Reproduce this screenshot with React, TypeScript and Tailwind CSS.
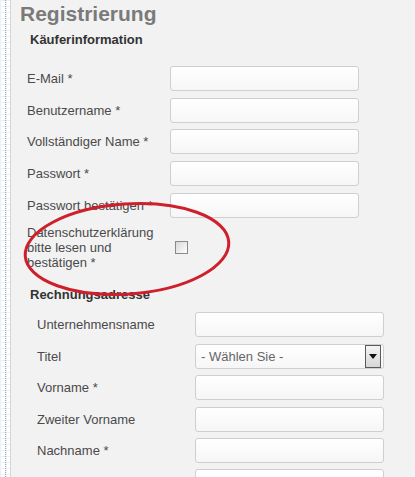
const sans = { fontFamily: '"Liberation Sans", Arial, sans-serif' };

function TextInput() {
  return (
    <div className="h-[25px] w-[189px] rounded-[3px] border border-[#cfcfcf] bg-gradient-to-b from-[#ffffff] to-[#f6f6f6]" />
  );
}

function Row({ label, labelWidth, children }: { label: string; labelWidth: string; children?: React.ReactNode }) {
  return (
    <div className="flex items-center">
      <div className={`${labelWidth} text-[13px] leading-[15px] text-[#4a4a4a]`}>{label}</div>
      {children ?? <TextInput />}
    </div>
  );
}

export default function App() {
  const first = ["E-Mail *", "Benutzername *", "Vollständiger Name *", "Passwort *", "Passwort bestätigen *"];
  const second = ["Unternehmensname", "Titel", "Vorname *", "Zweiter Vorname", "Nachname *", ""];

  return (
    <div className="relative flex h-[477px] w-[415px] overflow-hidden bg-[#f2f2f2]" style={sans}>
      {/* linker Rand mit Raster */}
      <div className="flex w-[10px] shrink-0 justify-center bg-white bg-[linear-gradient(#eef0f4_1px,transparent_1px),linear-gradient(90deg,#eef0f4_1px,transparent_1px)] bg-[size:6px_6px]">
        <div className="h-full border-l border-dotted border-[#8fa3c0]" />
      </div>

      <div className="flex-1 border-l border-[#d6d6d6] pl-[9px]">
        <h1 className="pt-[2px] text-[21px] font-bold leading-[24px] text-[#7a7a7a]">Registrierung</h1>
        <h2 className="mt-[6px] pl-[10px] text-[13px] font-bold leading-[15px] text-[#333]">Käuferinformation</h2>

        <div className="mt-[19px] flex flex-col gap-[6.7px] pl-[7px]">
          {first.map((l) => (
            <Row key={l} label={l} labelWidth="w-[143px]" />
          ))}
          <div className="mt-[1px] flex items-center">
            <div className="w-[143px] text-[13px] leading-[15px] text-[#4a4a4a]">
              Datenschutzerklärung
              <br />
              bitte lesen und
              <br />
              bestätigen *
            </div>
            <div className="ml-[5px] h-[13px] w-[13px] border border-[#8a8a8a] bg-gradient-to-br from-[#d8d8d8] to-[#ffffff]" />
          </div>
        </div>

        <h2 className="mt-[17px] pl-[10px] text-[13px] font-bold leading-[15px] text-[#333]">Rechnungsadresse</h2>

        <div className="mt-[10px] flex flex-col gap-[6.4px] pl-[17px]">
          {second.map((l) =>
            l === "Titel" ? (
              <Row key={l} label={l} labelWidth="w-[158px]">
                <div className="flex h-[25px] w-[189px] items-center justify-between rounded-[3px] border border-[#cfcfcf] bg-gradient-to-b from-[#ffffff] to-[#f6f6f6] pl-[5px] pr-[2px]">
                  <span className="text-[13px] text-[#666]">- Wählen Sie -</span>
                  <div className="flex h-[23px] w-[16px] items-center justify-center border border-[#5a5a5a] bg-gradient-to-b from-[#f4f4f4] to-[#d6d6d6]">
                    <svg width="8" height="5" viewBox="0 0 8 5">
                      <path d="M0 0h8L4 5z" fill="#111" />
                    </svg>
                  </div>
                </div>
              </Row>
            ) : (
              <Row key={l || "x"} label={l} labelWidth="w-[158px]" />
            )
          )}
        </div>
      </div>

      {/* rote Markierung */}
      <svg className="pointer-events-none absolute left-0 top-0" width="415" height="477" viewBox="0 0 415 477">
        <ellipse cx="127" cy="249" rx="102" ry="45" transform="rotate(-4 127 249)" fill="none" stroke="#cf1f2b" strokeWidth="3" />
      </svg>
    </div>
  );
}
